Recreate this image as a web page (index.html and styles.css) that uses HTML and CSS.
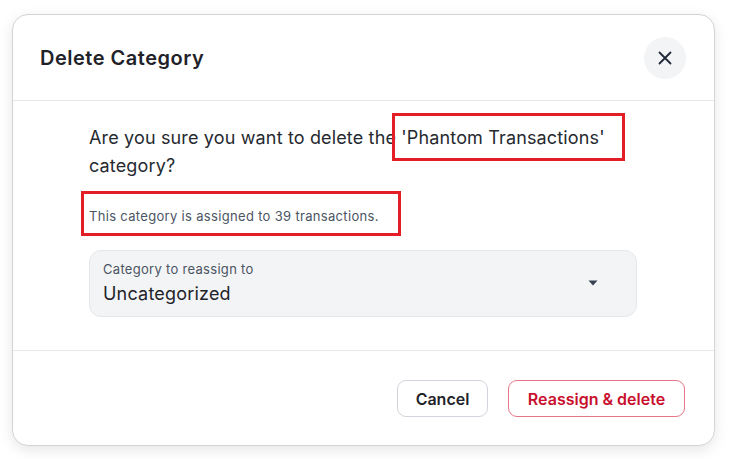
FILE: index.html
```html
<!DOCTYPE html>
<html>
<head>
<meta charset="utf-8">
<link rel="stylesheet" href="styles.css">
</head>
<body>
<div class="modal">
  <div class="header">
    <h2 class="title">Delete Category</h2>
    <button class="close" aria-label="Close">
      <svg width="16" height="16" viewBox="0 0 16 16"><path d="M2.5 2.5 L13.5 13.5 M13.5 2.5 L2.5 13.5" stroke="#1f2937" stroke-width="1.8" stroke-linecap="round"/></svg>
    </button>
  </div>
  <div class="body">
    <p class="question">Are you sure you want to delete the <span class="mark mark-name">'Phantom Transactions'</span> category?</p>
    <p class="info"><span class="mark mark-info">This category is assigned to 39 transactions.</span></p>
    <div class="select">
      <div class="select-text">
        <div class="select-label">Category to reassign to</div>
        <div class="select-value">Uncategorized</div>
      </div>
      <svg class="caret" width="10" height="6" viewBox="0 0 10 6"><path d="M0.5 0.5 H9.5 L5 5.5 Z" fill="#374151"/></svg>
    </div>
  </div>
  <div class="footer">
    <button class="btn btn-cancel">Cancel</button>
    <button class="btn btn-danger">Reassign &amp; delete</button>
  </div>
</div>
</body>
</html>
```
FILE: styles.css
```css
* { box-sizing: border-box; }
html, body { margin: 0; padding: 0; background: #ffffff; }
body {
  font-family: Inter, Roboto, "Noto Sans", sans-serif;
  color: #1f2937;
  width: 733px;
  height: 459px;
  overflow: hidden;
}
.modal {
  margin: 14px 0 0 12px;
  width: 703px;
  height: 432px;
  background: #fff;
  border: 1px solid #d4d4d8;
  border-radius: 16px;
  box-shadow: 0 4px 14px rgba(0,0,0,0.10);
  display: flex;
  flex-direction: column;
}
.header {
  height: 86px;
  padding: 0 28px 0 27px;
  display: flex;
  align-items: center;
  justify-content: space-between;
  border-bottom: 1px solid #e5e7eb;
}
.title {
  margin: 0;
  font-size: 20px;
  font-weight: 600;
  color: #1f2329;
  letter-spacing: 0.5px;
}
.close {
  width: 42px;
  height: 42px;
  border-radius: 50%;
  border: none;
  background: #f3f4f6;
  display: flex;
  align-items: center;
  justify-content: center;
  padding: 0;
}
.body {
  padding: 23px 77px 33px 76px;
  border-bottom: 1px solid #e5e7eb;
}
.question {
  margin: 0;
  font-size: 18px;
  line-height: 28px;
  color: #262a30;
  letter-spacing: 0.15px;
}
.mark { position: relative; }
.mark::after {
  content: "";
  position: absolute;
  border: 3.5px solid #e41e26;
  pointer-events: none;
}
.mark-name::after { left: -9px; right: -20px; top: -14px; bottom: -13px; }
.info {
  margin: 26px 0 0 0;
  font-size: 13px;
  line-height: 20px;
  color: #4b5563;
  letter-spacing: 0.32px;
}
.mark-info::after { left: -8px; right: -22px; top: -17px; bottom: -12px; }
.select {
  margin-top: 24px;
  height: 67px;
  background: #f3f4f6;
  border: 1px solid #e5e7eb;
  border-radius: 12px;
  padding: 0 38px 0 13px;
  display: flex;
  align-items: center;
  justify-content: space-between;
}
.select-text { display: flex; flex-direction: column; }
.select-label {
  font-size: 13px;
  line-height: 18px;
  color: #4b5563;
  letter-spacing: 0.3px;
}
.select-value {
  font-size: 18px;
  line-height: 26px;
  color: #1f2329;
  margin-top: 3px;
  letter-spacing: 0.2px;
}
.caret { margin-top: -2px; }
.footer {
  flex: 1;
  display: flex;
  justify-content: flex-end;
  align-items: flex-start;
  gap: 20px;
  padding: 29px 29px 0 0;
}
.btn {
  font-family: Inter, Roboto, "Noto Sans", sans-serif;
  height: 37px;
  border-radius: 9px;
  background: #fff;
  font-size: 16px;
  font-weight: 600;
  padding: 0;
}
.btn-cancel {
  width: 91px;
  border: 1px solid #d1d5db;
  color: #1f2329;
}
.btn-danger {
  width: 177px;
  border: 1px solid #e57787;
  color: #c8102e;
}
```
